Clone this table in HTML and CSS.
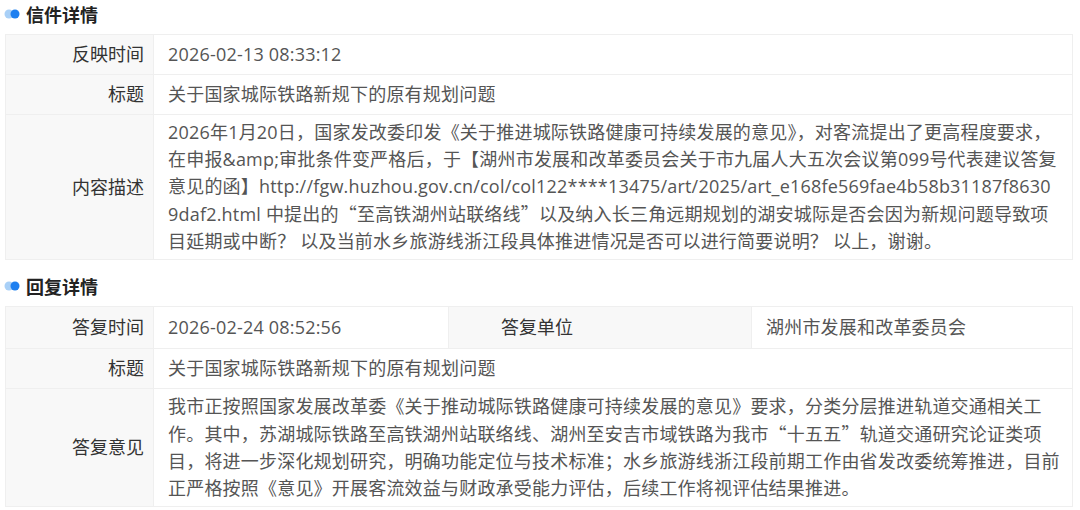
FILE: index.html
```html
<!DOCTYPE html>
<html>
<head>
  <meta charset="utf-8">
  <title>信件详情</title>
  <link rel="stylesheet" href="styles.css">
</head>
<body>
  <div class="section-title">
    <svg class="dot" width="16" height="10" viewBox="0 0 16 10">
      <circle cx="5" cy="5" r="4.5" fill="#a9d0f7"/>
      <circle cx="11" cy="5" r="4.5" fill="#1d7ff0"/>
    </svg>
    <span>信件详情</span>
  </div>

  <table class="detail">
    <tr class="single">
      <td class="label">反映时间</td>
      <td class="value">2026-02-13 08:33:12</td>
    </tr>
    <tr class="single">
      <td class="label">标题</td>
      <td class="value">关于国家城际铁路新规下的原有规划问题</td>
    </tr>
    <tr>
      <td class="label">内容描述</td>
      <td class="value text">2026年1月20日，国家发改委印发《关于推进城际铁路健康可持续发展的意见》，对客流提出了更高程度要求，在申报&amp;amp;审批条件变严格后，于【湖州市发展和改革委员会关于市九届人大五次会议第099号代表建议答复意见的函】http://fgw.huzhou.gov.cn/col/col122****13475/art/2025/art_e168fe569fae4b58b31187f86309daf2.html 中提出的<span class="cjk">“</span>至高铁湖州站联络线<span class="cjk">”</span>以及纳入长三角远期规划的湖安城际是否会因为新规问题导致项目延期或中断？ 以及当前水乡旅游线浙江段具体推进情况是否可以进行简要说明？ 以上，谢谢。</td>
    </tr>
  </table>

  <div class="section-title">
    <svg class="dot" width="16" height="10" viewBox="0 0 16 10">
      <circle cx="5" cy="5" r="4.5" fill="#a9d0f7"/>
      <circle cx="11" cy="5" r="4.5" fill="#1d7ff0"/>
    </svg>
    <span>回复详情</span>
  </div>

  <table class="detail reply">
    <tr class="single first">
      <td class="label">答复时间</td>
      <td class="value col-time">2026-02-24 08:52:56</td>
      <td class="label col-unit">答复单位</td>
      <td class="value">湖州市发展和改革委员会</td>
    </tr>
    <tr class="single">
      <td class="label">标题</td>
      <td class="value" colspan="3">关于国家城际铁路新规下的原有规划问题</td>
    </tr>
    <tr>
      <td class="label">答复意见</td>
      <td class="value text" colspan="3">我市正按照国家发展改革委《关于推动城际铁路健康可持续发展的意见》要求，分类分层推进轨道交通相关工作。其中，苏湖城际铁路至高铁湖州站联络线、湖州至安吉市域铁路为我市<span class="cjk">“</span>十五五<span class="cjk">”</span>轨道交通研究论证类项目，将进一步深化规划研究，明确功能定位与技术标准；水乡旅游线浙江段前期工作由省发改委统筹推进，目前正严格按照《意见》开展客流效益与财政承受能力评估，后续工作将视评估结果推进。</td>
    </tr>
  </table>
</body>
</html>
```

FILE: styles.css
```css
body {
  margin: 0;
  padding: 0 7px 0 5px;
  background-color: #fff;
  font-family: "Open Sans", "Noto Sans CJK SC", sans-serif;
  font-size: 18px;
  color: #555;
}

.cjk {
  font-family: "Noto Sans CJK SC", sans-serif;
}

.section-title {
  display: flex;
  align-items: center;
  gap: 6px;
  height: 28px;
  font-size: 18px;
  font-weight: bold;
  color: #222;
}

.section-title .dot {
  margin-left: -1px;
}

.section-title + .detail {
  margin-top: 6px;
}

.detail + .section-title {
  margin-top: 12px;
}

.detail {
  width: 100%;
  border-collapse: collapse;
  table-layout: fixed;
}

.detail td {
  border: 1px solid #efefef;
  padding: 4px 12px 4px 14px;
  line-height: 27px;
  letter-spacing: 0.2px;
  vertical-align: middle;
}

.detail .single td {
  height: 31px;
}

.detail .first td {
  height: 33px;
}

.detail td.label {
  width: 119px;
  padding: 4px 9px 4px 19px;
  background-color: #f8f8f8;
  color: #333;
  letter-spacing: 0;
  text-align: right;
}

.detail td.text {
  word-break: break-all;
}

.reply td.col-time {
  width: 268px;
}

.reply td.col-unit {
  width: 241px;
  padding-left: 52px;
  text-align: left;
}
```
